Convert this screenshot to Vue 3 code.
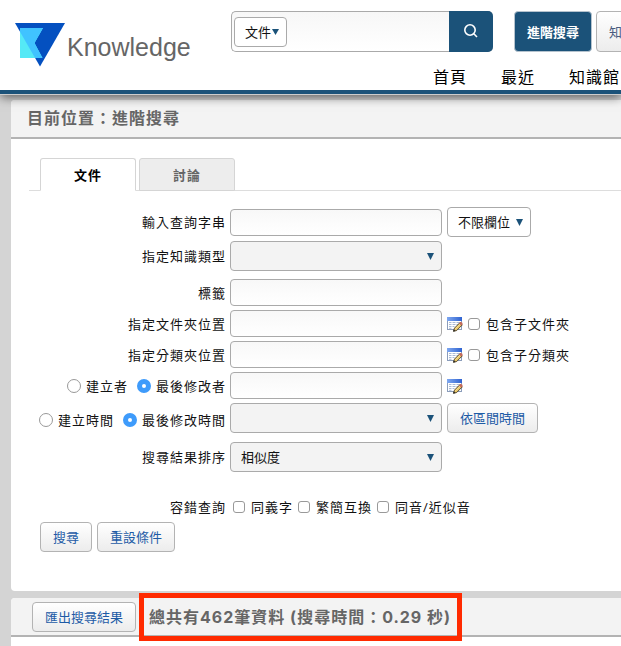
<script setup>
import { ref } from 'vue'

const scope = ref('文件')
const field = ref('不限欄位')
const sort = ref('相似度')
const by = ref('modifier')
const timeBy = ref('modified')
const tab = ref('文件')
const tabs = ['文件', '討論']
const navItems = ['首頁', '最近', '知識館']
const fuzzy = ['同義字', '繁簡互換', '同音/近似音']
const folders = [
  { id: 'folder', label: '指定文件夾位置', sub: '包含子文件夾' },
  { id: 'category', label: '指定分類夾位置', sub: '包含子分類夾' },
]
</script>

<template>
  <div class="page">
    <svg width="0" height="0" class="defs" aria-hidden="true">
      <defs>
        <linearGradient id="edit-head" x1="0" y1="0" x2="1" y2="0">
          <stop offset="0" stop-color="#7fa8f0" />
          <stop offset="1" stop-color="#2f62d0" />
        </linearGradient>
        <symbol id="edit" viewBox="0 0 16 16">
          <rect x="0" y="1" width="15" height="13" fill="#8b9dbb" />
          <rect x="0" y="1" width="15" height="4" fill="url(#edit-head)" />
          <rect x="1" y="5" width="13" height="8" fill="#fff" />
          <path d="M2 6.500h2.500M5.500 6.500h3M9.500 6.500h3.500M2 8.500h2.500M5.500 8.500h3M9.500 8.500h3M2 10.500h2.500M5.500 10.500h2M2 12.300h2.500" stroke="#a9bad6" stroke-width="1" />
          <path d="M6.500 15.300l1-3.200 5.500-5.500 2.300 2.200-5.600 5.700z" fill="#e9c767" stroke="#4b3c22" stroke-width=".9" />
          <path d="M8.500 12.700l4.900-4.900" stroke="#fbe9a6" stroke-width=".8" />
          <path d="M12 7.400l1.200-1.300c1.300-.8 2.900.8 2.200 2.200l-1.200 1.300z" fill="#c4695a" />
          <path d="M6.200 15.600l.6-2.100 1.700 1.600z" fill="#222" />
        </symbol>
      </defs>
    </svg>

    <header class="top">
      <a class="logo" href="#" aria-label="Knowledge">
        <svg width="50" height="44" viewBox="0 0 50 44" aria-hidden="true">
          <path d="M0 0H50L25 43.500z" fill="#0450c0" />
          <path d="M5 5H28L19.500 20 27.500 35H5z" fill="#55e9f6" />
          <path d="M5 5H28L19.500 20 27.500 35H20.100L5 8.700z" fill="#40c3ff" />
        </svg>
        <span class="brand">Knowledge</span>
      </a>
      <div class="tools">
        <div class="tool-row">
          <form class="search" @submit.prevent>
            <span class="pick scope">
              <select v-model="scope" aria-label="搜尋範圍"><option>文件</option></select>
              <svg width="7" height="6" viewBox="0 0 7 6"><path d="M0 0h7L3.500 6z" /></svg>
            </span>
            <input type="text" class="keyword" aria-label="關鍵字" />
            <button class="go" aria-label="搜尋">
              <svg width="16" height="16" viewBox="0 0 16 16" fill="none" stroke="#fff" stroke-width="1.600"><circle cx="7" cy="6" r="5.200" /><path d="M10.800 9.800l3.200 3.200" /></svg>
            </button>
          </form>
          <button class="btn advanced">進階搜尋</button>
          <button class="btn more">知</button>
        </div>
        <nav class="nav"><a v-for="n in navItems" :key="n" href="#">{{ n }}</a></nav>
      </div>
    </header>

    <main class="main">
      <section class="panel">
        <h1 class="bar title">目前位置：進階搜尋</h1>
        <div class="tabs" role="tablist">
          <button v-for="t in tabs" :key="t" role="tab" class="tab" :class="{ active: tab === t }" :aria-selected="tab === t" @click="tab = t">{{ t }}</button>
        </div>

        <form class="form" @submit.prevent>
          <div class="row tall">
            <label class="label" for="query">輸入查詢字串</label>
            <input id="query" type="text" class="text" />
            <span class="pick field">
              <select v-model="field" aria-label="查詢欄位"><option>不限欄位</option></select>
              <svg width="7" height="7" viewBox="0 0 7 7"><path d="M0 0h7L3.500 7z" /></svg>
            </span>
          </div>
          <div class="row tall">
            <label class="label" for="type">指定知識類型</label>
            <span class="pick wide">
              <select id="type"></select>
              <svg width="7" height="7" viewBox="0 0 7 7"><path d="M0 0h7L3.500 7z" /></svg>
            </span>
          </div>
          <div class="row spaced">
            <label class="label" for="tag">標籤</label>
            <input id="tag" type="text" class="text" />
          </div>
          <div v-for="f in folders" :key="f.id" class="row">
            <label class="label" :for="f.id">{{ f.label }}</label>
            <input :id="f.id" type="text" class="text" />
            <button type="button" class="edit" :aria-label="f.label"><svg width="16" height="16"><use href="#edit" /></svg></button>
            <label class="option"><input type="checkbox" />{{ f.sub }}</label>
          </div>
          <div class="row">
            <div class="label choices">
              <label class="option"><input v-model="by" type="radio" name="by" value="creator" />建立者</label>
              <label class="option"><input v-model="by" type="radio" name="by" value="modifier" />最後修改者</label>
            </div>
            <input type="text" class="text" aria-label="人員" />
            <button type="button" class="edit" aria-label="選擇人員"><svg width="16" height="16"><use href="#edit" /></svg></button>
          </div>
          <div class="row tall">
            <div class="label choices low">
              <label class="option"><input v-model="timeBy" type="radio" name="time" value="created" />建立時間</label>
              <label class="option"><input v-model="timeBy" type="radio" name="time" value="modified" />最後修改時間</label>
            </div>
            <span class="pick wide">
              <select aria-label="時間"></select>
              <svg width="7" height="7" viewBox="0 0 7 7"><path d="M0 0h7L3.500 7z" /></svg>
            </span>
            <button type="button" class="btn">依區間時間</button>
          </div>
          <div class="row tall sort">
            <label class="label" for="sort">搜尋結果排序</label>
            <span class="pick wide">
              <select id="sort" v-model="sort"><option>相似度</option></select>
              <svg width="7" height="7" viewBox="0 0 7 7"><path d="M0 0h7L3.500 7z" /></svg>
            </span>
          </div>
          <div class="row fuzzy">
            <span class="label">容錯查詢</span>
            <label v-for="z in fuzzy" :key="z" class="option"><input type="checkbox" />{{ z }}</label>
          </div>
          <div class="actions">
            <button class="btn">搜尋</button>
            <button type="reset" class="btn">重設條件</button>
          </div>
        </form>
      </section>

      <section class="panel results">
        <div class="bar">
          <button class="btn">匯出搜尋結果</button>
          <h2 class="summary">總共有462筆資料 (搜尋時間：0.29 秒)</h2>
        </div>
      </section>
    </main>
  </div>
</template>

<style>
body { background: #d4d4d4; }
</style>

<style scoped>
.page {
  display: flex;
  flex-direction: column;
  min-height: 100vh;
  overflow: hidden;
  font: 13px/20px "Open Sans", "Noto Sans CJK TC", sans-serif;
  color: #111;
}
.page * { box-sizing: border-box; }
.defs { display: block; height: 0; flex: none; }
button, input, select { margin: 0; font: inherit; color: inherit; }
button { cursor: pointer; }
a { color: inherit; text-decoration: none; }

.top {
  position: relative;
  display: flex;
  height: 94px;
  background: #fff;
  border-bottom: 4px solid #1b5279;
  box-shadow: 0 1px 0 #ccc, 0 3px 10px rgba(0, 0, 0, .6);
}
.logo {
  display: flex;
  flex: none;
  gap: 2px;
  width: 231px;
  padding: 23px 0 0 15px;
}
.brand {
  font: 25px/48px "Liberation Sans", sans-serif;
  color: #666;
}
.tools { flex: 1; min-width: 0; padding-top: 11px; }
.tool-row { display: flex; gap: 4px; height: 41px; }
.search {
  display: flex;
  flex: none;
  align-items: center;
  width: 262px;
  margin-right: 17px;
  padding-left: 2px;
  border: 1px solid #aaa;
  border-right: 0;
  border-radius: 5px;
  background: linear-gradient(#f7f7f7, #fff);
}
.keyword { flex: 1; min-width: 0; height: 36px; border: 0; background: none; outline: 0; }
.go {
  display: grid;
  place-items: center;
  align-self: stretch;
  width: 44px;
  margin: -1px 0;
  padding: 0;
  border: 0;
  border-radius: 0 5px 5px 0;
  background: #1b5279;
}
.nav {
  display: flex;
  gap: 34px;
  margin-top: 12px;
  padding-left: 202px;
  font-size: 16px;
  line-height: 26px;
  letter-spacing: 1px;
  white-space: nowrap;
  color: #000;
}

.btn {
  flex: none;
  height: 30px;
  padding: 0 12px;
  border: 1px solid #b3b3b3;
  border-radius: 4px;
  background: linear-gradient(#fff, #ececec);
  color: #1d5ba6;
  white-space: nowrap;
}
.tool-row .btn { height: 41px; }
.btn.advanced { border-color: #b5c3ce; background: #1b5279; color: #fff; font-weight: 700; }
.btn.more { min-width: 60px; text-align: left; color: #4a5c80; }

.pick { display: grid; flex: none; align-items: center; }
.pick select {
  grid-area: 1 / 1;
  width: 100%;
  height: 30px;
  padding: 0 18px 0 10px;
  border: 1px solid #aaa;
  border-radius: 4px;
  background: #fff;
  appearance: none;
}
.pick svg {
  grid-area: 1 / 1;
  justify-self: end;
  margin-right: 8px;
  fill: #1b5279;
  pointer-events: none;
}
.wide { width: 212px; }
.wide select { background: #f3f3f3; }
.field { width: 84px; }
.scope { width: 53px; }
.scope select { padding-right: 14px; }

.main {
  display: flex;
  flex: 1;
  flex-direction: column;
  gap: 7px;
  padding: 6px 0 0 11px;
}
.panel { border-radius: 4px 0 0 4px; background: #fff; }
.results { flex: 1; border-radius: 4px 0 0 0; }
.bar {
  display: flex;
  align-items: center;
  height: 39px;
  margin: 0;
  border-bottom: 2px solid #b3b3b3;
  border-radius: 4px 0 0 0;
  background: #f3f3f3;
}
.title, .summary {
  font-size: 16px;
  font-weight: 700;
  letter-spacing: 1px;
  white-space: nowrap;
  color: #666;
}
.title { padding: 0 0 2px 16px; }

.tabs {
  display: flex;
  gap: 3px;
  margin: 19px 0 0 18px;
  padding-left: 11px;
  height: 33px;
  border-bottom: 1px solid #ddd;
}
.tab {
  width: 96px;
  height: 33px;
  padding: 0;
  border: 1px solid #d5d5d5;
  border-radius: 3px 3px 0 0;
  background: #ededed;
  color: #666;
  font-weight: 700;
  letter-spacing: 1px;
}
.tab.active { border-bottom-color: #fff; background: #fff; color: #000; }

.form { padding: 16px 0 39px; }
.row {
  display: flex;
  align-items: center;
  gap: 5px;
  height: 27px;
  margin-bottom: 4px;
  letter-spacing: 1px;
  white-space: nowrap;
}
.tall { height: 30px; }
.spaced { margin-top: 8px; }
.row .pick, .row .btn { letter-spacing: normal; }
.label { flex: none; width: 215px; margin-right: -1px; text-align: right; }
.low { padding-top: 4px; }
.choices { display: flex; justify-content: flex-end; gap: 9px; }
.text {
  width: 212px;
  height: 27px;
  padding: 0 8px;
  border: 1px solid #aaa;
  border-radius: 4px;
  background: linear-gradient(#f8f8f8, #fff);
}
.edit { display: grid; padding: 0; border: 0; background: none; }
.option { display: flex; align-items: center; gap: 6px; }
.choices .option { gap: 5px; }
.option input {
  width: 12px;
  height: 12px;
  border: 1px solid #999;
  border-radius: 3px;
  background: #fff;
  appearance: none;
}
.option input[type="checkbox"]:checked { background: #3e96f5; }
.option input[type="radio"] { width: 14px; height: 14px; border-radius: 50%; }
.option input[type="radio"]:checked { border: 5px solid #3e9bfb; }
.sort { margin-top: 9px; }
.fuzzy { margin: 21px 0 2px; }
.fuzzy .label { margin-right: 2px; }
.actions { display: flex; gap: 5px; padding-left: 29px; }

.results .bar { gap: 8px; padding-left: 21px; }
.summary {
  position: relative;
  margin: 0;
  padding: 0 6px 0 5px;
  font-family: Inter, "Noto Sans CJK TC", sans-serif;
  line-height: 38px;
  outline: 5px solid #ff2a00;
}
</style>
